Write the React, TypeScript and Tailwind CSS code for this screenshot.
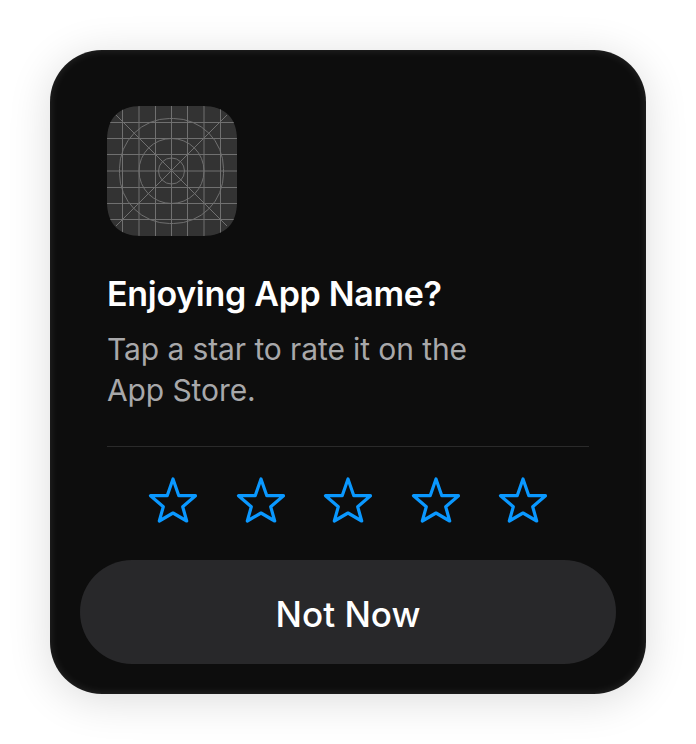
const vertical = [15.5, 32, 48.5, 64.5, 80.5, 97, 113.5];
const horizontal = [16.5, 32.5, 48.5, 65, 81.5, 97.5, 113.5];
const squircle =
  "M34 0 H96 C118 0 130 12 130 34 V96 C130 118 118 130 96 130 H34 C12 130 0 118 0 96 V34 C0 12 12 0 34 0 Z";

function Star() {
  return (
    <svg width="50" height="48" viewBox="0 0 50 48" fill="none" className="shrink-0">
      <path
        d="M25 3 L30.8 19.7 L47.5 19.7 L34.7 30.7 L38.7 45 L25 37 L11.3 45 L15.3 30.7 L2.5 19.7 L19.2 19.7 Z"
        stroke="#0a98ff"
        strokeWidth="3.2"
        strokeLinejoin="round"
      />
    </svg>
  );
}

function AppIcon() {
  return (
    <svg width="130" height="130" viewBox="0 0 130 130" className="block shrink-0">
      <defs>
        <clipPath id="icon-clip">
          <path d={squircle} />
        </clipPath>
      </defs>
      <path d={squircle} fill="#333333" />
      <g stroke="#707070" strokeWidth="1" fill="none" clipPath="url(#icon-clip)">
        {vertical.map((p) => (
          <path key={`v${p}`} d={`M${p} 0 V130`} />
        ))}
        {horizontal.map((p) => (
          <path key={`h${p}`} d={`M0 ${p} H130`} />
        ))}
        <path d="M9 9 L120 120 M120 9 L9 120" />
        <rect x="12.5" y="12.5" width="104" height="105" rx="50" />
        <circle cx="64.5" cy="65" r="32.5" />
        <circle cx="64.5" cy="65" r="13" />
      </g>
    </svg>
  );
}

export default function App() {
  return (
    <div className="w-[696px] h-[744px] bg-white flex items-start justify-center pt-[50px] font-['Inter',sans-serif]">
      <div className="w-[596px] h-[644px] rounded-[52px] bg-[#0d0d0d] shadow-[0_6px_44px_rgba(0,0,0,0.14),inset_0_0_10px_rgba(255,255,255,0.12)] flex flex-col pt-[56px] pb-[30px] px-[30px]">
        <div className="px-[27px]">
          <AppIcon />
          <h1 className="mt-[38px] text-[34px] leading-[40px] font-semibold text-white tracking-[-0.3px]">
            Enjoying App Name?
          </h1>
          <p className="mt-[15px] w-[400px] text-[30px] leading-[41px] text-[#a8a8aa] tracking-[-0.1px]">
            Tap a star to rate it on the App Store.
          </p>
          <div className="mt-[35px] h-px w-[482px] bg-[#2a2a2a]" />
        </div>
        <div className="mt-[29px] flex justify-between pl-[68px] pr-[68px]">
          <Star />
          <Star />
          <Star />
          <Star />
          <Star />
        </div>
        <button className="mt-auto h-[104px] w-[536px] rounded-[52px] bg-[#28282a] text-white text-[35px] leading-[108px] font-medium">
          Not Now
        </button>
      </div>
    </div>
  );
}
